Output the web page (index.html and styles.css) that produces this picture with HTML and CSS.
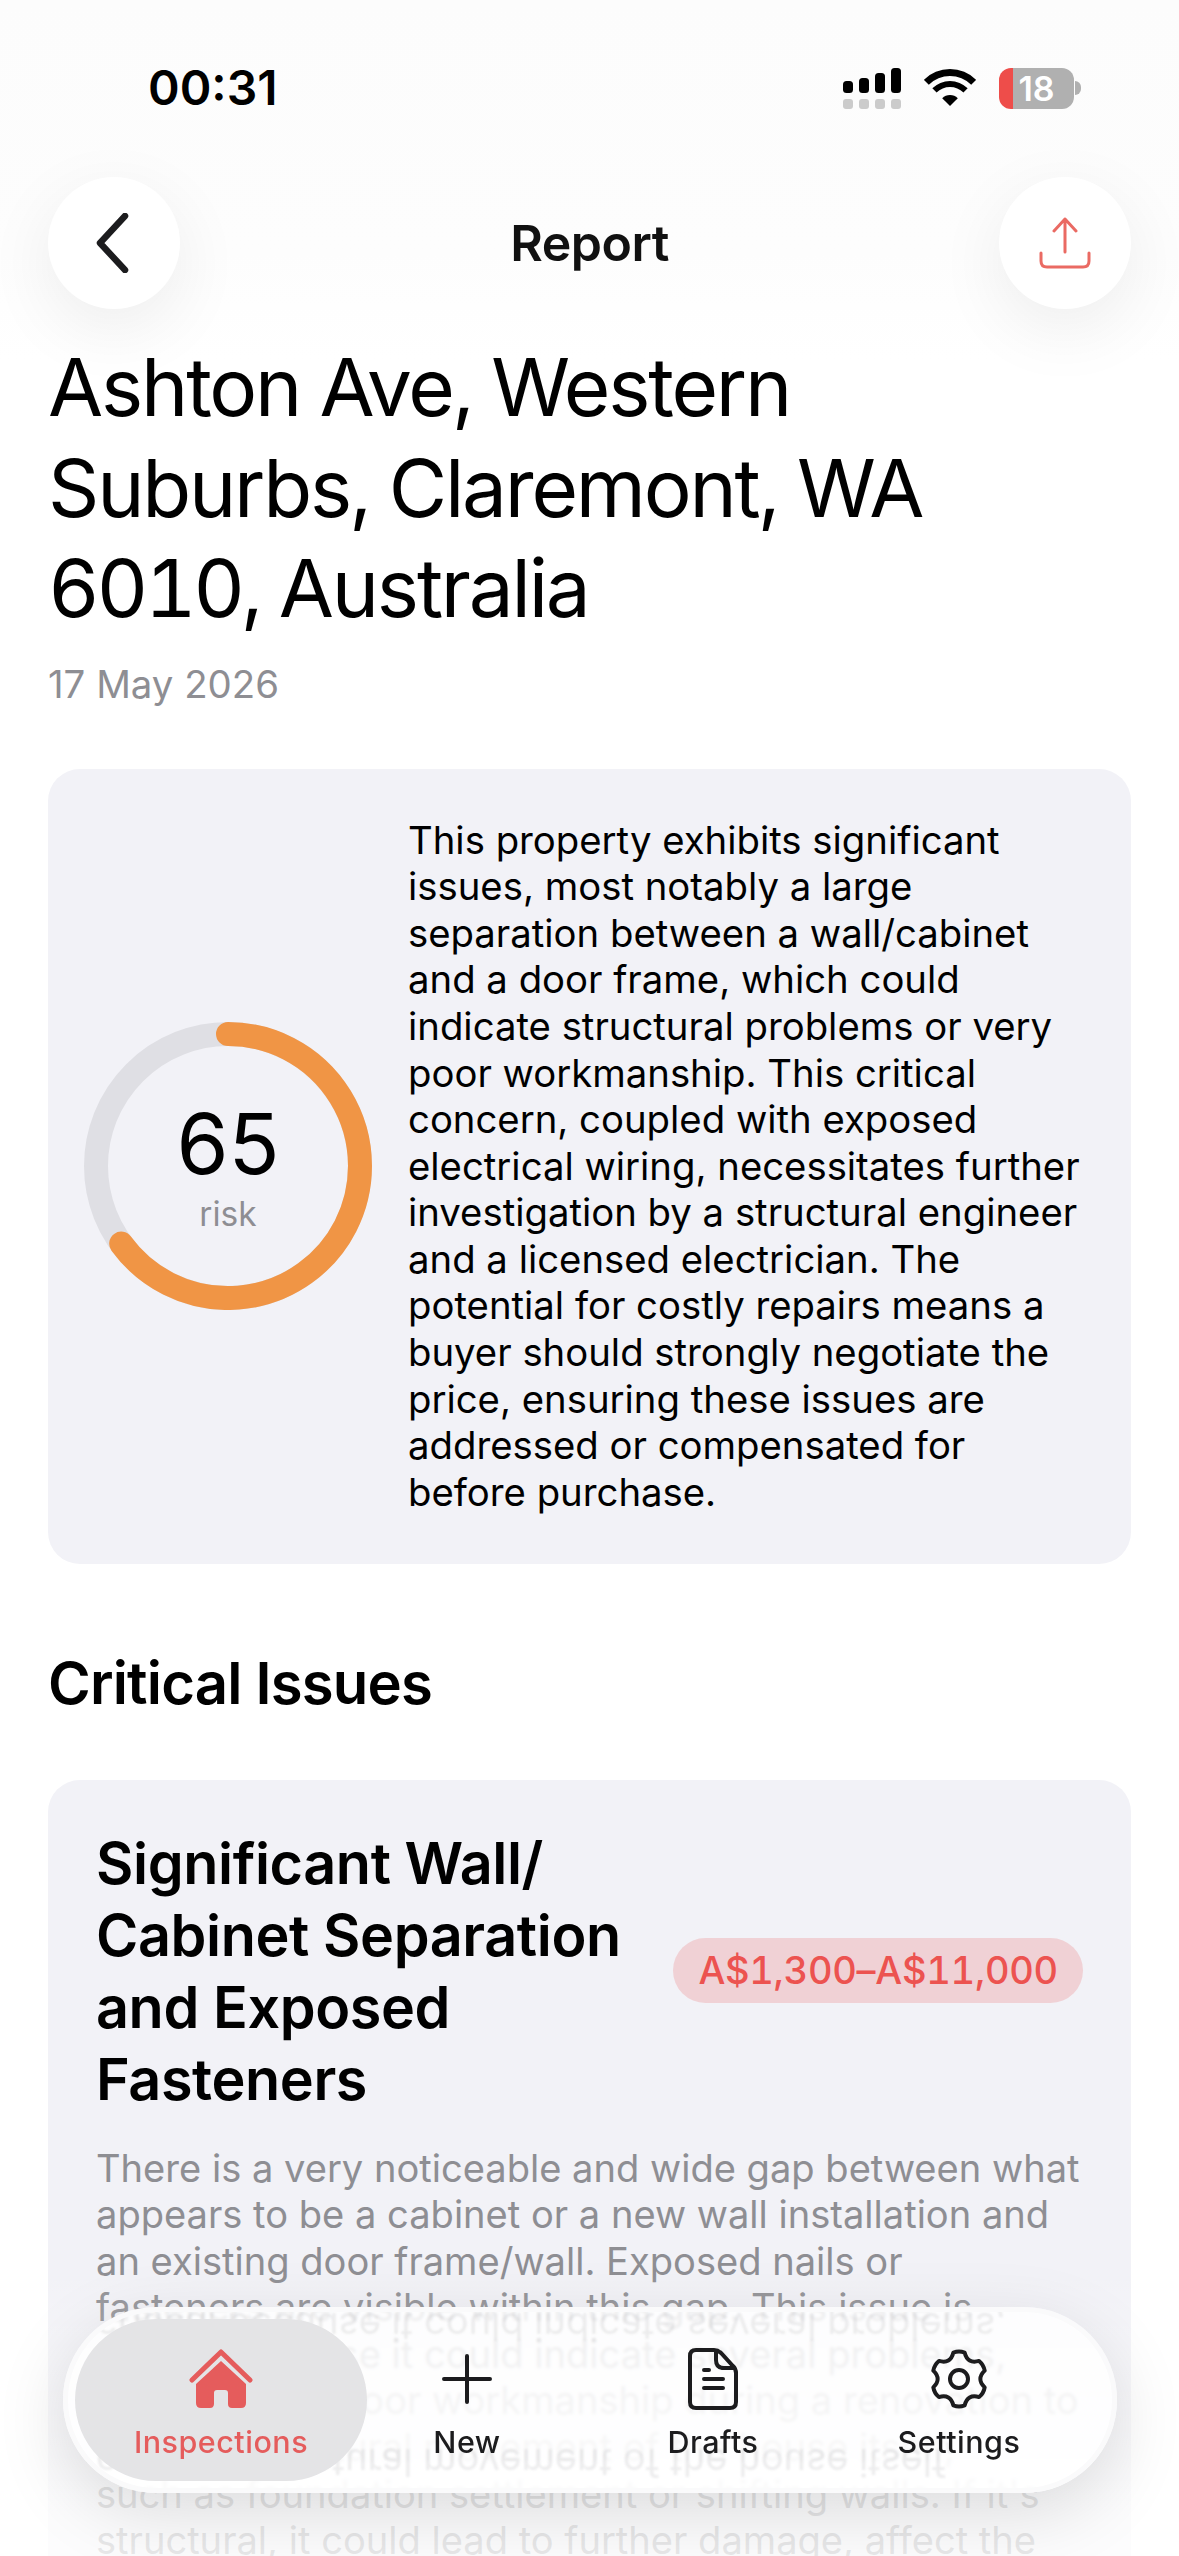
FILE: index.html
```html
<!DOCTYPE html>
<html lang="en">
<head>
<meta charset="utf-8">
<title>Report</title>
<link rel="stylesheet" href="styles.css">
</head>
<body>
<main class="content">
  <h1 class="address">Ashton Ave, Western Suburbs, Claremont, WA <span class="address-num">6010,</span> Australia</h1>
  <p class="date">17 May 2026</p>
  <section class="summary">
    <div class="gauge">
      <svg class="gauge-ring" viewBox="0 0 288 288" width="288" height="288">
        <circle cx="144" cy="144" r="132" fill="none" stroke="#dfdfe4" stroke-width="24"/>
        <path d="M144 12A132 132 0 1 1 37.200 221.600" fill="none" stroke="#f09545" stroke-width="24" stroke-linecap="round"/>
      </svg>
      <div class="gauge-label">
        <span class="gauge-num">65</span>
        <span class="gauge-risk">risk</span>
      </div>
    </div>
    <p class="summary-text">This property exhibits significant issues, most notably a large separation between a wall/cabinet and a door frame, which could indicate structural problems or very poor workmanship. This critical concern, coupled with exposed electrical wiring, necessitates further investigation by a structural engineer and a licensed electrician. The potential for costly repairs means a buyer should strongly negotiate the price, ensuring these issues are addressed or compensated for before purchase.</p>
  </section>
  <h2 class="section-title">Critical Issues</h2>
  <section class="issue">
    <div class="issue-head">
      <h3 class="issue-title">Significant Wall/ Cabinet Separation and Exposed Fasteners</h3>
      <span class="price">A$1,300–A$11,000</span>
    </div>
    <p class="issue-text">There is a very noticeable and wide gap between what<br>appears to be a cabinet or a new wall installation and<br>an existing door frame/wall. Exposed nails or<br>fasteners are visible within this gap. This issue is<br>critical because it could indicate several problems,<br>ranging from poor workmanship during a renovation to<br>or even structural movement of the house itself,<br>such as foundation settlement or shifting walls. If it's<br>structural, it could lead to further damage, affect the</p>
  </section>
</main>

<div class="bottom-fade"></div>

<header class="top">
  <div class="status">
    <span class="time">00:31</span>
    <div class="status-icons">
      <svg width="58" height="41" viewBox="0 0 58 41" class="signal">
        <rect x="0" y="13" width="10" height="12" rx="3.500"/>
        <rect x="16" y="10" width="10" height="15" rx="3.500"/>
        <rect x="32" y="5" width="10" height="20" rx="3.500"/>
        <rect x="48" y="0" width="10" height="25" rx="3.500"/>
        <g fill="#cbcbcb">
          <rect x="0" y="31" width="10" height="10" rx="3"/>
          <rect x="16" y="31" width="10" height="10" rx="3"/>
          <rect x="32" y="31" width="10" height="10" rx="3"/>
          <rect x="48" y="31" width="10" height="10" rx="3"/>
        </g>
      </svg>
      <svg width="52" height="38" viewBox="0 0 52 38" class="wifi">
        <path d="M-.16 10.840A37 37 0 0 1 52.160 10.840L47.200 15.800A30 30 0 0 0 4.800 15.800Z"/>
        <path d="M8.320 19.320A25 25 0 0 1 43.680 19.320L39.430 23.570A19 19 0 0 0 12.570 23.570Z"/>
        <path d="M18.200 29.200A11 11 0 0 1 33.800 29.200L26 37Z"/>
      </svg>
      <div class="battery">
        <div class="battery-body"><span class="battery-num">18</span></div>
        <span class="battery-cap"></span>
      </div>
    </div>
  </div>
  <div class="nav">
    <button class="round-btn" aria-label="Back">
      <svg width="44" height="60" viewBox="0 0 44 60"><path d="M33 3L8 30L33 57" fill="none" stroke="#1c1c1e" stroke-width="6.500" stroke-linecap="round" stroke-linejoin="round"/></svg>
    </button>
    <span class="nav-title">Report</span>
    <button class="round-btn" aria-label="Share">
      <svg width="52" height="52" viewBox="0 0 52 52"><path d="M26 35V2M15 14L26 2L37 14M2 36V44Q2 50 8 50H44Q50 50 50 44V36" fill="none" stroke="#ea6a63" stroke-width="3" stroke-linecap="round" stroke-linejoin="round"/></svg>
    </button>
  </div>
</header>

<nav class="tabbar">
  <div class="ghost">
    <p class="ghost-flip">critical because it could indicate several problems,</p>
    <p class="ghost-flip2">or even structural movement of the house itself,</p>
  </div>
  <a class="tab tab-active">
    <span class="tab-icon"><svg width="64" height="60" viewBox="0 0 64 60"><path d="M3 31L32 3L61 31" fill="none" stroke="#e55c5c" stroke-width="5" stroke-linecap="round" stroke-linejoin="round"/><path d="M32 12L57 35V54Q57 59 52 59H43Q39 59 39 55V44Q39 41 36 41H28Q25 41 25 44V55Q25 59 21 59H12Q7 59 7 54V35Z" fill="#e55c5c"/></svg></span>
    <span class="tab-label">Inspections</span>
  </a>
  <a class="tab">
    <span class="tab-icon"><svg width="50" height="50" viewBox="0 0 50 50"><path d="M25 2V48M2 25H48" fill="none" stroke="#1c1c1e" stroke-width="4" stroke-linecap="round"/></svg></span>
    <span class="tab-label">New</span>
  </a>
  <a class="tab">
    <span class="tab-icon"><svg width="50" height="62" viewBox="0 0 50 62"><path d="M8 2H26Q30 2 33 5L45 18Q48 21 48 25V54Q48 60 42 60H8Q2 60 2 54V8Q2 2 8 2Z" fill="none" stroke="#1c1c1e" stroke-width="4"/><path d="M28 3V12Q28 20 36 20H47" fill="none" stroke="#1c1c1e" stroke-width="4"/><path d="M16 22H21M16 31H35M16 40H35" fill="none" stroke="#1c1c1e" stroke-width="4" stroke-linecap="round"/></svg></span>
    <span class="tab-label">Drafts</span>
  </a>
  <a class="tab">
    <span class="tab-icon"><svg width="56" height="60" viewBox="0 -1 56 60"><path d="M22.390 2.590Q28 .5 33.610 2.590Q36.500 14.280 48.060 10.930Q52.680 14.750 53.680 20.660Q45 29 53.680 37.340Q52.680 43.250 48.060 47.070Q36.500 43.720 33.610 55.410Q28 57.500 22.390 55.410Q19.500 43.720 7.940 47.070Q3.320 43.250 2.320 37.340Q11 29 2.320 20.660Q3.320 14.750 7.940 10.930Q19.500 14.280 22.390 2.590Z" fill="none" stroke="#1c1c1e" stroke-width="4" stroke-linejoin="round"/><circle cx="28" cy="29" r="9" fill="none" stroke="#1c1c1e" stroke-width="4"/></svg></span>
    <span class="tab-label">Settings</span>
  </a>
</nav>
</body>
</html>
```
FILE: styles.css
```css
* { box-sizing: border-box; }
html, body { margin: 0; height: 2556px; overflow: hidden; background: #fff; }
body { position: relative; font-family: Inter, "Liberation Sans", sans-serif; color: #000; width: 1179px; }
p, h1, h2, h3 { margin: 0; font-weight: 400; }

.content { padding: 337px 48px 0; }
.address { font-size: 80px; line-height: 100.500px; letter-spacing: -2.200px; width: 1000px; font-variant-numeric: tabular-nums; }
.address-num { letter-spacing: -3.500px; }
.date { font-size: 38.400px; line-height: 50px; color: #8e8e93; margin-top: 20px; }

.summary { margin-top: 60px; background: #f2f2f7; border-radius: 32px; height: 795px; padding: 0 48px 0 36px; display: flex; align-items: center; gap: 36px; }
.gauge { position: relative; width: 288px; height: 288px; flex: none; }
.gauge-ring { display: block; }
.gauge-label { position: absolute; inset: 0; display: flex; flex-direction: column; align-items: center; justify-content: center; }
.gauge-num { font-size: 84px; line-height: 92px; }
.gauge-risk { font-size: 33.500px; line-height: 40px; color: #8e8e93; margin-top: 4px; }
.summary-text { font-size: 38.300px; line-height: 46.600px; flex: 1; }

.section-title { font-size: 58px; line-height: 70px; font-weight: 600; letter-spacing: -.8px; margin-top: 84px; }

.issue { margin-top: 62px; background: #f2f2f7; border-radius: 32px; padding: 47px 48px; height: 900px; }
.issue-head { display: flex; align-items: center; justify-content: space-between; gap: 30px; }
.issue-title { font-size: 57.500px; line-height: 72px; font-weight: 600; letter-spacing: -.4px; width: 540px; }
.price { flex: none; font-size: 38px; line-height: 65px; padding: 0 25px; background: #f0d1d5; color: #ec5350; border-radius: 33px; font-weight: 500; font-variant-numeric: tabular-nums; letter-spacing: -.25px; }
.issue-text { font-size: 38.100px; line-height: 46.600px; color: #8e8e93; margin-top: 30px; white-space: nowrap; }

.bottom-fade { position: absolute; left: 0; right: 0; bottom: 0; height: 286px; background: linear-gradient(to bottom, rgba(255,255,255,0), rgba(255,255,255,.74) 75%, rgba(255,255,255,.8)); }

.top { position: absolute; top: 0; left: 0; right: 0; height: 360px; background: linear-gradient(to bottom, #fcfcfc 0, #fdfdfd 70%, rgba(255,255,255,0) 100%); }
.status { display: flex; justify-content: space-between; align-items: center; padding: 60px 98px 0 148px; height: 116px; }
.time { font-size: 48px; font-weight: 600; line-height: 56px; }
.status-icons { display: flex; align-items: center; gap: 23px; }
.signal, .wifi { display: block; }
.battery { display: flex; align-items: center; }
.battery-body { width: 75px; height: 41px; border-radius: 12px; background: linear-gradient(to right, #ee4d4a 14px, #b0b0b0 14px); display: flex; align-items: center; justify-content: center; }
.battery-num { color: #fff; font-size: 34px; font-weight: 600; }
.battery-cap { width: 6px; height: 14px; background: #b0b0b0; border-radius: 0 7px 7px 0; margin-left: 1px; }

.nav { display: flex; justify-content: space-between; align-items: center; padding: 0 48px; margin-top: 61px; }
.round-btn { width: 132px; height: 132px; border-radius: 50%; border: 0; background: #fff; box-shadow: 0 20px 70px rgba(0,0,0,.07); display: flex; align-items: center; justify-content: center; padding: 0; }
.nav-title { font-size: 50px; font-weight: 600; letter-spacing: -.5px; color: #111; }

.tabbar { position: absolute; left: 63px; top: 2307px; width: 1054px; height: 186px; border-radius: 93px; background: rgba(255,255,255,.82); -webkit-backdrop-filter: blur(1.500px); backdrop-filter: blur(1.500px); border: 5px solid #fafafb; box-shadow: 0 20px 70px rgba(0,0,0,.13); display: grid; grid-template-columns: repeat(4, 246px); padding: 7px 0 7px 30px; overflow: hidden; }
.tab { position: relative; display: flex; flex-direction: column; align-items: center; gap: 13px; padding-top: 28px; font-size: 30.500px; line-height: 36px; font-weight: 500; color: #1c1c1e; letter-spacing: .5px; }
.tab-icon { height: 64px; display: flex; align-items: center; justify-content: center; }
.tab-icon svg { display: block; }
.tab-active { background: #e4e4e6; border-radius: 81px; color: #e55c5c; margin: 0 -23px; }
.ghost { position: absolute; inset: 0; font-size: 38.100px; line-height: 30px; color: #8e8e93; opacity: .16; filter: blur(1px); }
.ghost p { position: absolute; left: 28px; white-space: nowrap; }
.ghost-flip { top: 0; transform: scaleY(-1); }
.ghost-flip2 { top: 136px; transform: scaleY(-1); }
```
